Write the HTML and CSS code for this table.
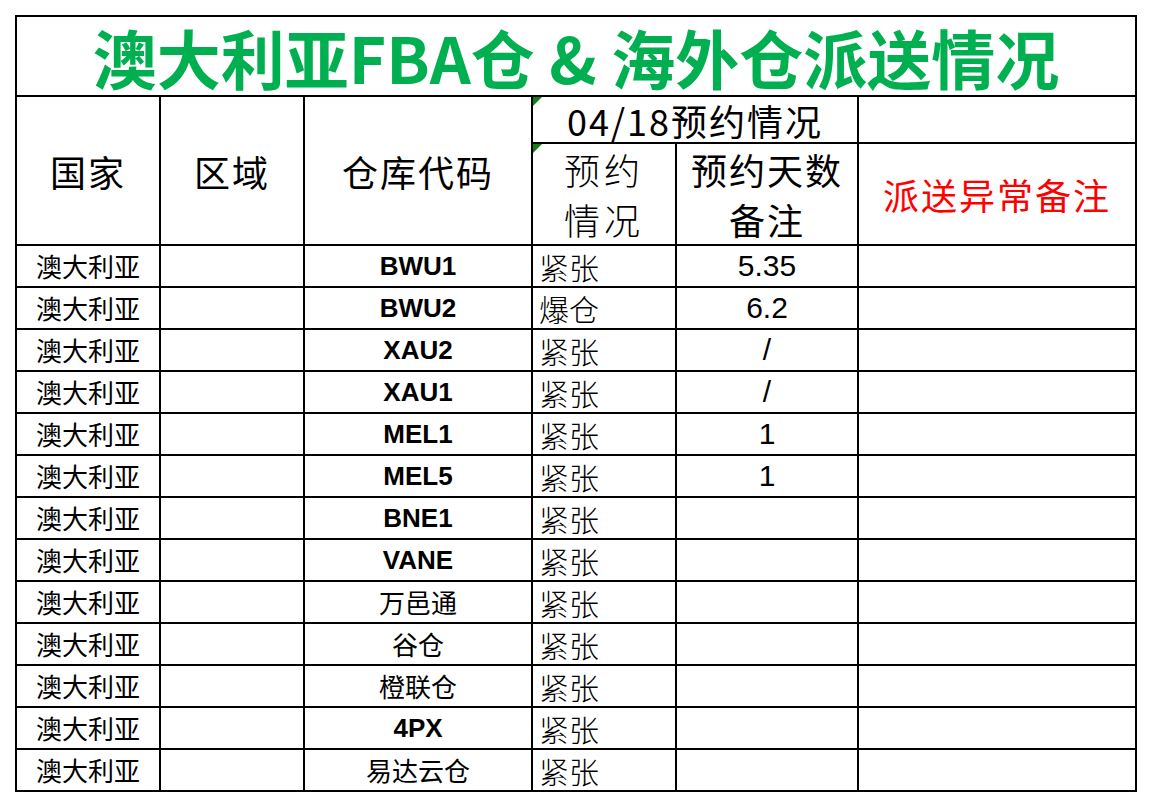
FILE: index.html
```html
<!DOCTYPE html>
<html lang="zh-CN">
<head>
<meta charset="utf-8">
<title>澳大利亚FBA仓 &amp; 海外仓派送情况</title>
<link rel="stylesheet" href="styles.css">
</head>
<body>
<div class="sheet">
  <table class="grid">
    <colgroup>
      <col class="c1"><col class="c2"><col class="c3"><col class="c4"><col class="c5"><col class="c6">
    </colgroup>
    <tbody>
      <tr class="r-title">
        <td colspan="6" class="title">澳大利亚FBA仓 &amp; 海外仓派送情况</td>
      </tr>
      <tr class="r-head1">
        <td rowspan="2" class="head">国家</td>
        <td rowspan="2" class="head">区域</td>
        <td rowspan="2" class="head">仓库代码</td>
        <td colspan="2" class="date flag"><span class="mark"></span>04/18预约情况</td>
        <td></td>
      </tr>
      <tr class="r-head2">
        <td class="head2 thin flag"><span class="mark"></span>预约<br>情况</td>
        <td class="head2">预约天数<br>备注</td>
        <td class="alert">派送异常备注</td>
      </tr>
      <tr class="row"><td class="country">澳大利亚</td><td></td><td class="code latin">BWU1</td><td class="status">紧张</td><td class="num">5.35</td><td></td></tr>
      <tr class="row"><td class="country">澳大利亚</td><td></td><td class="code latin">BWU2</td><td class="status">爆仓</td><td class="num">6.2</td><td></td></tr>
      <tr class="row"><td class="country">澳大利亚</td><td></td><td class="code latin">XAU2</td><td class="status">紧张</td><td class="num">/</td><td></td></tr>
      <tr class="row"><td class="country">澳大利亚</td><td></td><td class="code latin">XAU1</td><td class="status">紧张</td><td class="num">/</td><td></td></tr>
      <tr class="row"><td class="country">澳大利亚</td><td></td><td class="code latin">MEL1</td><td class="status">紧张</td><td class="num">1</td><td></td></tr>
      <tr class="row"><td class="country">澳大利亚</td><td></td><td class="code latin">MEL5</td><td class="status">紧张</td><td class="num">1</td><td></td></tr>
      <tr class="row"><td class="country">澳大利亚</td><td></td><td class="code latin">BNE1</td><td class="status">紧张</td><td class="num"></td><td></td></tr>
      <tr class="row"><td class="country">澳大利亚</td><td></td><td class="code latin">VANE</td><td class="status">紧张</td><td class="num"></td><td></td></tr>
      <tr class="row"><td class="country">澳大利亚</td><td></td><td class="code">万邑通</td><td class="status">紧张</td><td class="num"></td><td></td></tr>
      <tr class="row"><td class="country">澳大利亚</td><td></td><td class="code">谷仓</td><td class="status">紧张</td><td class="num"></td><td></td></tr>
      <tr class="row"><td class="country">澳大利亚</td><td></td><td class="code">橙联仓</td><td class="status">紧张</td><td class="num"></td><td></td></tr>
      <tr class="row"><td class="country">澳大利亚</td><td></td><td class="code latin">4PX</td><td class="status">紧张</td><td class="num"></td><td></td></tr>
      <tr class="row"><td class="country">澳大利亚</td><td></td><td class="code">易达云仓</td><td class="status">紧张</td><td class="num"></td><td></td></tr>
    </tbody>
  </table>
</div>
</body>
</html>
```

FILE: styles.css
```css
html, body {
  margin: 0;
  padding: 0;
  background: #ffffff;
}

body {
  font-family: "Noto Sans CJK SC", "Noto Sans", sans-serif;
  color: #000000;
}

.sheet {
  padding: 15px 0 0 15px;
}

.grid {
  border-collapse: collapse;
  table-layout: fixed;
  width: 1122px;
}

.c1 { width: 144px; }
.c2 { width: 144px; }
.c3 { width: 228px; }
.c4 { width: 144px; }
.c5 { width: 182px; }
.c6 { width: 278px; }

.grid td {
  border: 2px solid #000000;
  padding: 0;
  text-align: center;
  vertical-align: middle;
  white-space: nowrap;
}

.r-title { height: 80px; }
.r-head1 { height: 47px; }
.r-head2 { height: 100px; }
.row { height: 42px; }

.title {
  font-size: 64px;
  font-weight: 700;
  line-height: 70px;
  color: #00b050;
  padding-top: 4px;
}

.head {
  font-size: 36px;
  letter-spacing: 2px;
  line-height: 40px;
  padding-top: 8px;
}

.date {
  font-size: 36px;
  letter-spacing: 2px;
  line-height: 36px;
  padding-top: 2px;
}

.flag {
  position: relative;
}

.mark {
  position: absolute;
  top: 0;
  left: 0;
  width: 0;
  height: 0;
  border-top: 9px solid #118011;
  border-right: 9px solid transparent;
}

.head2 {
  font-size: 36px;
  letter-spacing: 2px;
  line-height: 50px;
}

.thin {
  font-weight: 300;
  letter-spacing: 4px;
}

.alert {
  font-size: 36px;
  letter-spacing: 2px;
  line-height: 40px;
  color: #ff0000;
  padding-top: 6px;
}

.country {
  font-size: 26px;
  line-height: 30px;
  padding-top: 2px;
}

.code {
  font-size: 26px;
  line-height: 30px;
}

.latin {
  font-family: "Liberation Sans", Arial, sans-serif;
  font-weight: 700;
}

.grid td.status {
  text-align: left;
  padding-left: 6px;
  font-size: 30px;
  font-weight: 300;
  line-height: 34px;
}

.num {
  font-family: "Liberation Sans", Arial, sans-serif;
  font-size: 30px;
  line-height: 34px;
}
```
